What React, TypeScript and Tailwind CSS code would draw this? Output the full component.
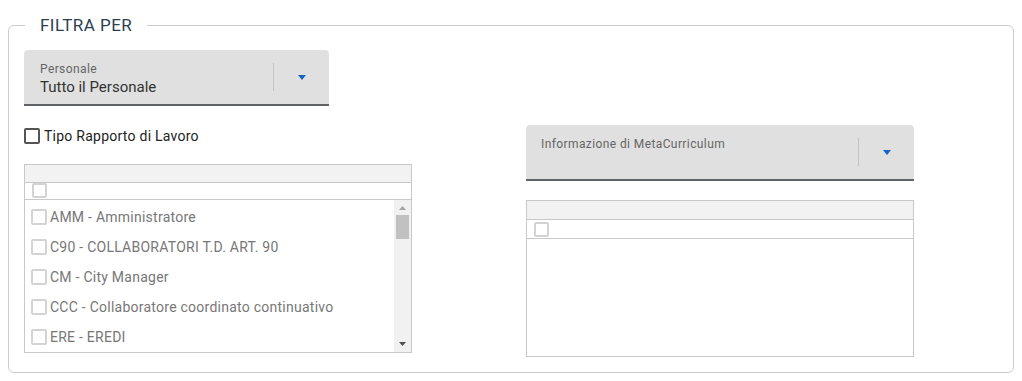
import React from 'react';

const font = { fontFamily: 'Roboto, "Liberation Sans", sans-serif' };

const items = [
  'AMM - Amministratore',
  'C90 - COLLABORATORI T.D. ART. 90',
  'CM - City Manager',
  'CCC - Collaboratore coordinato continuativo',
  'ERE - EREDI',
];

const Arrow = () => (
  <svg width="8" height="5" viewBox="0 0 8 5" className="block">
    <path d="M0 0 L8 0 L4 5 Z" fill="#1565c0" />
  </svg>
);

const SelectBox: React.FC<{ label: string; value?: string; width: string }> = ({ label, value, width }) => (
  <div className={`${width} h-[56px] bg-[#e0e0e0] rounded-t-[4px] border-b-2 border-[#5f6368] flex items-stretch`}>
    <div className="flex-1 pl-[16px] pt-[12px]">
      <div className="text-[12px] leading-[14px] text-[#666666] tracking-[0.4px]">{label}</div>
      {value && <div className="text-[15px] leading-[18px] mt-[2px] text-[#333333]">{value}</div>}
    </div>
    <div className="flex items-center">
      <div className="w-px h-[28px] bg-[#c4c4c4]" />
      <div className="w-[55px] flex justify-center">
        <Arrow />
      </div>
    </div>
  </div>
);

const Box = ({ big = false }: { big?: boolean }) => (
  <div className={`${big ? 'w-[16px] h-[16px]' : 'w-[15px] h-[15px]'} border-2 border-[#d3d3d3] rounded-[2px] bg-white shrink-0`} />
);

const ListHeader = () => (
  <>
    <div className="h-[19px] bg-[#f2f2f2] border-b border-[#c8c8c8]" />
    <div className="h-[19px] border-b border-[#c8c8c8] flex items-center pl-[7px]">
      <Box />
    </div>
  </>
);

export default function App() {
  return (
    <div className="w-[1022px] h-[381px] bg-white px-[8px] pt-[15px]" style={font}>
      <fieldset className="border border-[#cccccc] rounded-[6px] p-0 m-0 h-[358px]">
        <legend className="ml-[16px] px-[15px] text-[17px] leading-[20px] text-[#2c3e50] tracking-[0.45px]">FILTRA PER</legend>
        <div className="pl-[15px] pt-[15px]">
          <SelectBox label="Personale" value="Tutto il Personale" width="w-[305px]" />
          <div className="flex mt-[19px] gap-[114px]">
            <div className="w-[388px] flex flex-col">
              <label className="flex items-center h-[20px] mt-[1px] gap-[4px] text-[14px] text-[#222222] tracking-[0.25px]">
                <span className="w-[16px] h-[16px] border-2 border-[#555555] rounded-[2px] bg-white" />
                Tipo Rapporto di Lavoro
              </label>
              <div className="mt-[18px] border border-[#c8c8c8] h-[189px] flex flex-col">
                <ListHeader />
                <div className="flex flex-1">
                  <div className="flex-1 pt-[2px]">
                    {items.map((t) => (
                      <div key={t} className="h-[30px] flex items-center pl-[6px] gap-[3px] text-[14px] text-[#777777] tracking-[0.25px] whitespace-nowrap">
                        <Box big />
                        {t}
                      </div>
                    ))}
                  </div>
                  <div className="w-[17px] bg-[#f1f1f1] flex flex-col items-center py-[6px]">
                    <svg width="7" height="4" viewBox="0 0 7 4"><path d="M0 4 L7 4 L3.5 0 Z" fill="#a3a3a3" /></svg>
                    <div className="w-[13px] h-[24px] bg-[#c1c1c1] mt-[5px]" />
                    <div className="flex-1" />
                    <svg width="7" height="4" viewBox="0 0 7 4"><path d="M0 0 L7 0 L3.5 4 Z" fill="#505050" /></svg>
                  </div>
                </div>
              </div>
            </div>
            <div className="w-[388px] flex flex-col">
              <div className="w-[388px] h-[56px] bg-[#e0e0e0] rounded-t-[4px] border-b-2 border-[#5f6368] flex items-stretch">
                <div className="flex-1 pl-[15px] pt-[12px]">
                  <div className="text-[12px] leading-[14px] text-[#666666] tracking-[0.4px]">Informazione di MetaCurriculum</div>
                </div>
                <div className="flex items-center">
                  <div className="w-px h-[28px] bg-[#c4c4c4]" />
                  <div className="w-[55px] flex justify-center">
                    <Arrow />
                  </div>
                </div>
              </div>
              <div className="mt-[19px] border border-[#c8c8c8] h-[157px] flex flex-col">
                <ListHeader />
              </div>
            </div>
          </div>
        </div>
      </fieldset>
    </div>
  );
}
